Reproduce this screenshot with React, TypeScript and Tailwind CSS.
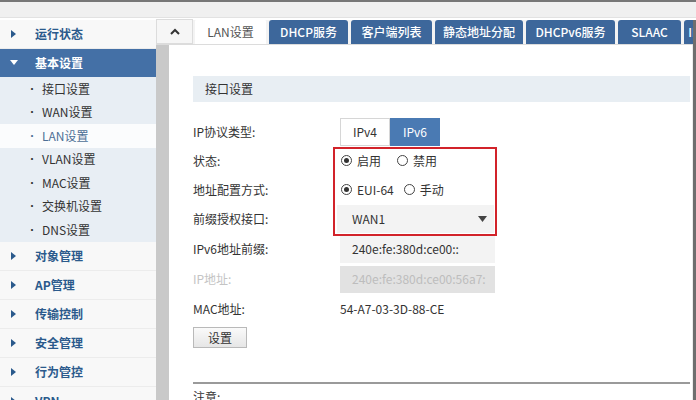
import React from "react";

const FONT = { fontFamily: '"Noto Sans CJK SC", "Noto Sans", sans-serif' };

const SUB_ITEMS = ["接口设置", "WAN设置", "LAN设置", "VLAN设置", "MAC设置", "交换机设置", "DNS设置"];
const MAIN_AFTER = ["对象管理", "AP管理", "传输控制", "安全管理", "行为管控", "VPN"];

const TABS = [
  { label: "LAN设置", w: "w-[71px]" },
  { label: "DHCP服务", w: "w-[79px]" },
  { label: "客户端列表", w: "w-[81px]" },
  { label: "静态地址分配", w: "w-[88px]" },
  { label: "DHCPv6服务", w: "w-[89px]" },
  { label: "SLAAC", w: "w-[63px]" },
  { label: "IP", w: "w-[20px]" },
];

function Caret({ open = false }: { open?: boolean }) {
  if (open) {
    return (
      <svg width="8" height="6" viewBox="0 0 8 6" className="shrink-0">
        <path d="M0 0 L8 0 L4 5 Z" fill="#ffffff" />
      </svg>
    );
  }
  return (
    <svg width="6" height="8" viewBox="0 0 6 8" className="shrink-0">
      <path d="M0 0 L5 4 L0 8 Z" fill="#2b5a8c" />
    </svg>
  );
}

function MainItem({ label }: { label: string }) {
  return (
    <div className="flex h-[29px] items-center border-b border-[#ececec] bg-[#f8f8f8] pl-[11px]">
      <Caret />
      <span className="ml-[18px] text-[12px] font-bold text-[#2b5a8c]">{label}</span>
    </div>
  );
}

function Radio({ checked, label }: { checked?: boolean; label: string }) {
  return (
    <label className="flex items-center gap-[5px]">
      <span className="flex h-[11px] w-[11px] items-center justify-center rounded-full border border-[#444] bg-white">
        {checked && <span className="h-[5px] w-[5px] rounded-full bg-[#333]" />}
      </span>
      <span>{label}</span>
    </label>
  );
}

function FormRow({ label, h, muted, children }: { label: string; h: string; muted?: boolean; children: React.ReactNode }) {
  return (
    <div className={`flex items-center ${h}`}>
      <div className={`w-[147px] shrink-0 ${muted ? "text-[#c4c4c4]" : "text-[#333]"}`}>{label}</div>
      <div className="flex flex-1 items-center">{children}</div>
    </div>
  );
}

export default function App() {
  return (
    <div className="flex h-[400px] w-[696px] flex-col overflow-hidden bg-white text-[12px] text-[#333]" style={FONT}>
      <div className="h-[18px] shrink-0 border-t-2 border-b border-t-[#777] border-b-[#e2e2e2] bg-[#f0f0f0]" />
      <div className="flex min-h-0 flex-1 pt-[2px]">
        {/* sidebar */}
        <aside className="w-[156px] shrink-0">
          <MainItem label="运行状态" />
          <div className="flex h-[28px] items-center bg-[#4470a6] pl-[10px]">
            <Caret open />
            <span className="ml-[17px] text-[12px] font-bold text-white">基本设置</span>
          </div>
          <div className="bg-[#e8eef4]">
            {SUB_ITEMS.map((s) => (
              <div
                key={s}
                className={`flex h-[23.5px] items-center pl-[27px] ${s === "LAN设置" ? "bg-[#fbfcfd] text-[#4d6f96]" : "text-[#333]"}`}
              >
                <span className="mr-[5px] text-[10px] leading-none">•</span>
                <span>{s}</span>
              </div>
            ))}
          </div>
          {MAIN_AFTER.map((m) => (
            <MainItem key={m} label={m} />
          ))}
        </aside>

        {/* right part */}
        <div className="flex min-w-0 flex-1 flex-col border-r-[3px] border-r-[#6e6e6e]">
          <div className="flex h-[25px] min-w-0 shrink-0 items-end border-b border-[#dcdcdc] bg-[#f3f3f3]">
            <div className="flex h-[25px] w-[37px] shrink-0 items-center justify-center border border-[#dcdcdc] bg-[#f6f6f6]">
              <svg width="10" height="7" viewBox="0 0 10 7">
                <path d="M1 6 L5 2 L9 6" fill="none" stroke="#333" strokeWidth="2" />
              </svg>
            </div>
            <div className="ml-[2px] flex h-[25px] min-w-0 flex-1 items-end gap-[3px] overflow-hidden">
              {TABS.map((t, i) => (
                <div
                  key={t.label}
                  className={`flex shrink-0 items-center justify-center overflow-hidden rounded-t-[3px] ${t.w} ${
                    i === 0 ? "h-[25px] bg-white text-[#555]" : "h-[24px] bg-[#3d679b] font-medium text-white"
                  }`}
                >
                  {t.label}
                </div>
              ))}
            </div>
          </div>

          <div className="flex min-h-0 flex-1">
            <div className="w-[13px] shrink-0 bg-[#c9c9c9]" />
            <main className="min-w-0 flex-1 border-r border-[#ececec] pl-[24px] pr-[2px]">
              <div className="mt-[31px] flex h-[26px] items-center bg-[#e8eef3] pl-[12px] text-[#333]">接口设置</div>

              <div className="relative mt-[15px]">
                <FormRow label="IP协议类型:" h="h-[29px]">
                  <div className="flex h-[28px] self-start">
                    <div className="flex w-[50px] items-center justify-center border border-[#d6d6d6] bg-white text-[#333]">IPv4</div>
                    <div className="flex w-[50px] items-center justify-center bg-[#4a7ab3] text-white">IPv6</div>
                  </div>
                </FormRow>
                <FormRow label="状态:" h="h-[29px]">
                  <div className="flex items-center gap-[16px] pl-[1px]">
                    <Radio checked label="启用" />
                    <Radio label="禁用" />
                  </div>
                </FormRow>
                <FormRow label="地址配置方式:" h="h-[29px]">
                  <div className="flex items-center gap-[10px] pl-[1px]">
                    <Radio checked label="EUI-64" />
                    <Radio label="手动" />
                  </div>
                </FormRow>
                <FormRow label="前缀授权接口:" h="h-[30px]">
                  <div className="ml-[-3px] flex h-[28px] w-[157px] items-center justify-between bg-[#f3f3f3] pl-[15px] pr-[7px]">
                    <span>WAN1</span>
                    <svg width="9" height="6" viewBox="0 0 9 6">
                      <path d="M0 0 L9 0 L4.5 6 Z" fill="#444" />
                    </svg>
                  </div>
                </FormRow>
                <FormRow label="IPv6地址前缀:" h="h-[30px]">
                  <div className="flex h-[27px] w-[155px] items-center bg-[#f3f3f3] pl-[12px]">240e:fe:380d:ce00::</div>
                </FormRow>
                <FormRow label="IP地址:" h="h-[30px]" muted>
                  <div className="flex h-[27px] w-[155px] items-center overflow-hidden whitespace-nowrap bg-[#e2e2e2] pl-[12px] text-[#bdbdbd]">
                    240e:fe:380d:ce00:56a7:
                  </div>
                </FormRow>
                <FormRow label="MAC地址:" h="h-[30px]">
                  <span>54-A7-03-3D-88-CE</span>
                </FormRow>
                <button className="mt-[3px] h-[21px] w-[54px] border border-[#b9b9b9] bg-gradient-to-b from-[#fafafa] to-[#e6e6e6] text-[12px] text-[#333]">
                  设置
                </button>

                <div className="pointer-events-none absolute left-[140px] top-[30px] h-[89px] w-[164px] border-2 border-[#d2232a]" />
              </div>

              <div className="mt-[34px] border-t-2 border-[#9a9a9a]" />
              <div className="mt-[4px]">注意:</div>
            </main>
          </div>
        </div>
      </div>
    </div>
  );
}
